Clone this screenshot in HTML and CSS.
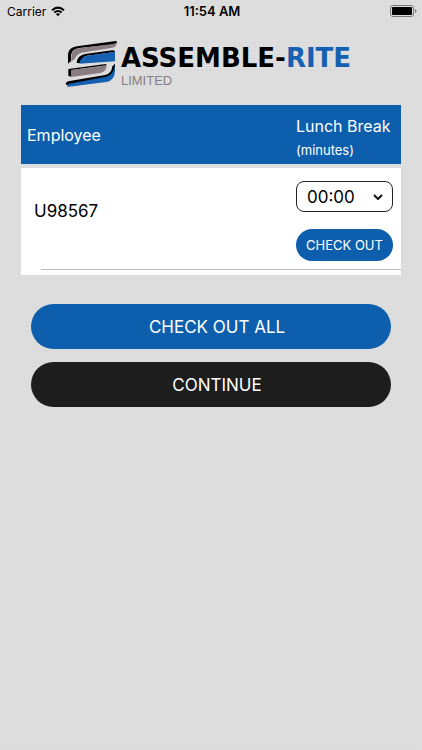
FILE: index.html
```html
<!DOCTYPE html>
<html lang="en">
<head>
    <meta charset="UTF-8">
    <meta name="viewport" content="width=device-width, initial-scale=1.0">
    <title>Assemble-Rite Check Out</title>
    <link rel="stylesheet" href="styles.css">
</head>
<body>

    <div class="status-bar">
        <div class="carrier">
            Carrier
            <svg width="14" height="11" viewBox="0 0 14 11" aria-hidden="true">
                <path d="M0.3 3.5 Q7 -2.6 13.7 3.5 L12.2 5 Q7 0.6 1.8 5 Z"/>
                <path d="M2.6 5.8 Q7 2 11.4 5.8 L9.9 7.3 Q7 4.9 4.1 7.3 Z"/>
                <path d="M4.9 8.1 Q7 6.5 9.1 8.1 L7 10.3 Z"/>
            </svg>
        </div>
        <div class="time">11:54 AM</div>
        <div class="battery">
            <svg width="27" height="12" viewBox="0 0 27 12" aria-hidden="true">
                <rect x="0.5" y="0.5" width="23" height="11" rx="2.5" fill="none" stroke="#777"/>
                <rect x="2" y="2" width="20" height="8" rx="1"/>
                <path d="M25 4 Q26.5 4.5 26.5 6 Q26.5 7.5 25 8 Z" fill="#777"/>
            </svg>
        </div>
    </div>

    <div class="logo">
        <svg width="54" height="50" viewBox="6 4 162 150" aria-hidden="true">
            <path d="M15 78 V50 Q16 30 42 26 L158 10 Q162 10 162 14 L158 20 L50 31 Q26 34 24 52 L24 70 Z"/>
            <path d="M25 72 V54 Q27 35 50 31 L150 19 L161 15 Q161 27 148 30 L56 45 Q42 48 37 62 Z" fill="#8a7d82"/>
            <path d="M41 76 Q42 54 66 49 L148 38 Q156 37 156 43 L72 54 Q56 57 54 76 Z"/>
            <path d="M49 78 Q52 58 72 54 L156 42 V71 Z" fill="#1560b0"/>
            <path d="M16 94 L128 79 L132 83 L26 97 V117 L16 115 Z"/>
            <path d="M24 97 L131 83 Q131 102 112 106 L24 118 Z" fill="#8a7d82"/>
            <path d="M148 86 L156 78 V92 Q154 116 130 121 L20 142 Q10 144 8 138 Q8 133 16 131 L126 112 Q146 108 148 86 Z"/>
            <path d="M12 148 L18 138 L130 117 Q150 112 156 84 V100 Q156 128 130 133 Z" fill="#1560b0"/>
        </svg>
        <div class="logo-text">
            <div class="logo-name">ASSEMBLE-<span>RITE</span></div>
            <div class="logo-sub">LIMITED</div>
        </div>
    </div>

    <div class="container">
        <table>
            <thead>
                <tr>
                    <th>Employee</th>
                    <th class="break-col"><label for="lunchBreak">Lunch Break <small>(minutes)</small></label></th>
                </tr>
            </thead>
            <tbody>
                <tr>
                    <td class="employee">U98567</td>
                    <td class="break-col">
                        <div class="select-box">
                            <select id="lunchBreak">
                                <option>00:00</option>
                                <option>00:15</option>
                                <option>00:30</option>
                                <option>00:45</option>
                                <option>01:00</option>
                            </select>
                            <svg width="10" height="6" viewBox="0 0 10 6" aria-hidden="true">
                                <path d="M1 1 L5 5 L9 1" fill="none" stroke="#111" stroke-width="2"/>
                            </svg>
                        </div>
                        <button class="check-out">CHECK OUT</button>
                    </td>
                </tr>
                <tr>
                    <td colspan="2"><hr></td>
                </tr>
            </tbody>
        </table>

        <div class="actions">
            <button>CHECK OUT ALL</button>
            <button class="continue">CONTINUE</button>
        </div>
    </div>

</body>
</html>
```
FILE: styles.css
```css
* {
    box-sizing: border-box;
}
body {
    margin: 0;
    font-family: Inter, "Liberation Sans", sans-serif;
    color: #000;
    background-color: #dddddd;
    background-image:
        repeating-linear-gradient(0deg, rgba(0, 0, 0, 0.01) 0px 1px, transparent 1px 4px),
        repeating-linear-gradient(90deg, rgba(255, 255, 255, 0.06) 0px 1px, transparent 1px 4px);
}
.status-bar {
    display: grid;
    grid-template-columns: 1fr auto 1fr;
    align-items: center;
    height: 22px;
    padding: 0 5px 0 7px;
    font-size: 12px;
}
.carrier {
    display: flex;
    align-items: center;
    gap: 5px;
}
.time {
    font-size: 13px;
    font-weight: 600;
    line-height: 16px;
}
.battery {
    display: flex;
    justify-content: flex-end;
}
.logo {
    display: flex;
    justify-content: center;
    gap: 2px;
    height: 66px;
    padding: 17px 6px 0 0;
}
.logo-text {
    padding-top: 4px;
}
.logo-name {
    font-family: "DejaVu Sans", sans-serif;
    font-size: 26px;
    font-weight: bold;
    line-height: 30px;
}
.logo-name span {
    color: #1560b0;
}
.logo-sub {
    font-family: "Liberation Sans", sans-serif;
    font-size: 13px;
    line-height: 15px;
    color: #8a7d82;
}
.container {
    margin: 17px 21px 0;
}
table {
    width: 100%;
    border-spacing: 0;
    font-size: 17px;
}
th {
    height: 63px;
    padding: 0 6px;
    border-bottom: 4px solid #dddddd;
    background: #0d5fae;
    background-clip: padding-box;
    color: white;
    font-size: 16px;
    font-weight: normal;
    line-height: 24px;
    text-align: left;
}
th.break-col {
    padding-top: 7px;
}
th small {
    display: block;
    font-size: 13px;
}
td {
    padding: 0;
    background: white;
}
td.employee {
    padding: 0 13px 16px;
}
.break-col {
    width: 105px;
    padding-left: 0;
    padding-right: 8px;
    white-space: nowrap;
}
td.break-col {
    padding-top: 13px;
    padding-bottom: 8px;
}
.select-box {
    position: relative;
    margin-bottom: 17px;
}
.select-box svg {
    position: absolute;
    top: 13px;
    right: 10px;
    pointer-events: none;
}
select {
    display: block;
    width: 100%;
    height: 31px;
    padding: 0 10px;
    border: 1px solid #222;
    border-radius: 8px;
    background: white;
    color: #000;
    font-family: inherit;
    font-size: 17px;
    appearance: none;
}
hr {
    margin: 0 0 5px 20px;
    border: none;
    border-top: 1px solid #bbb;
}
button {
    display: block;
    width: 100%;
    height: 45px;
    padding: 0;
    border: none;
    border-radius: 23px;
    background: #0d5fae;
    color: white;
    font-family: inherit;
    font-size: 17px;
    cursor: pointer;
}
.check-out {
    height: 32px;
    font-size: 13px;
}
.actions {
    display: grid;
    gap: 13px;
    margin: 29px 10px 0;
}
.actions button {
    padding-left: 12px;
}
.actions .continue {
    background: #1d1d1d;
}
```
